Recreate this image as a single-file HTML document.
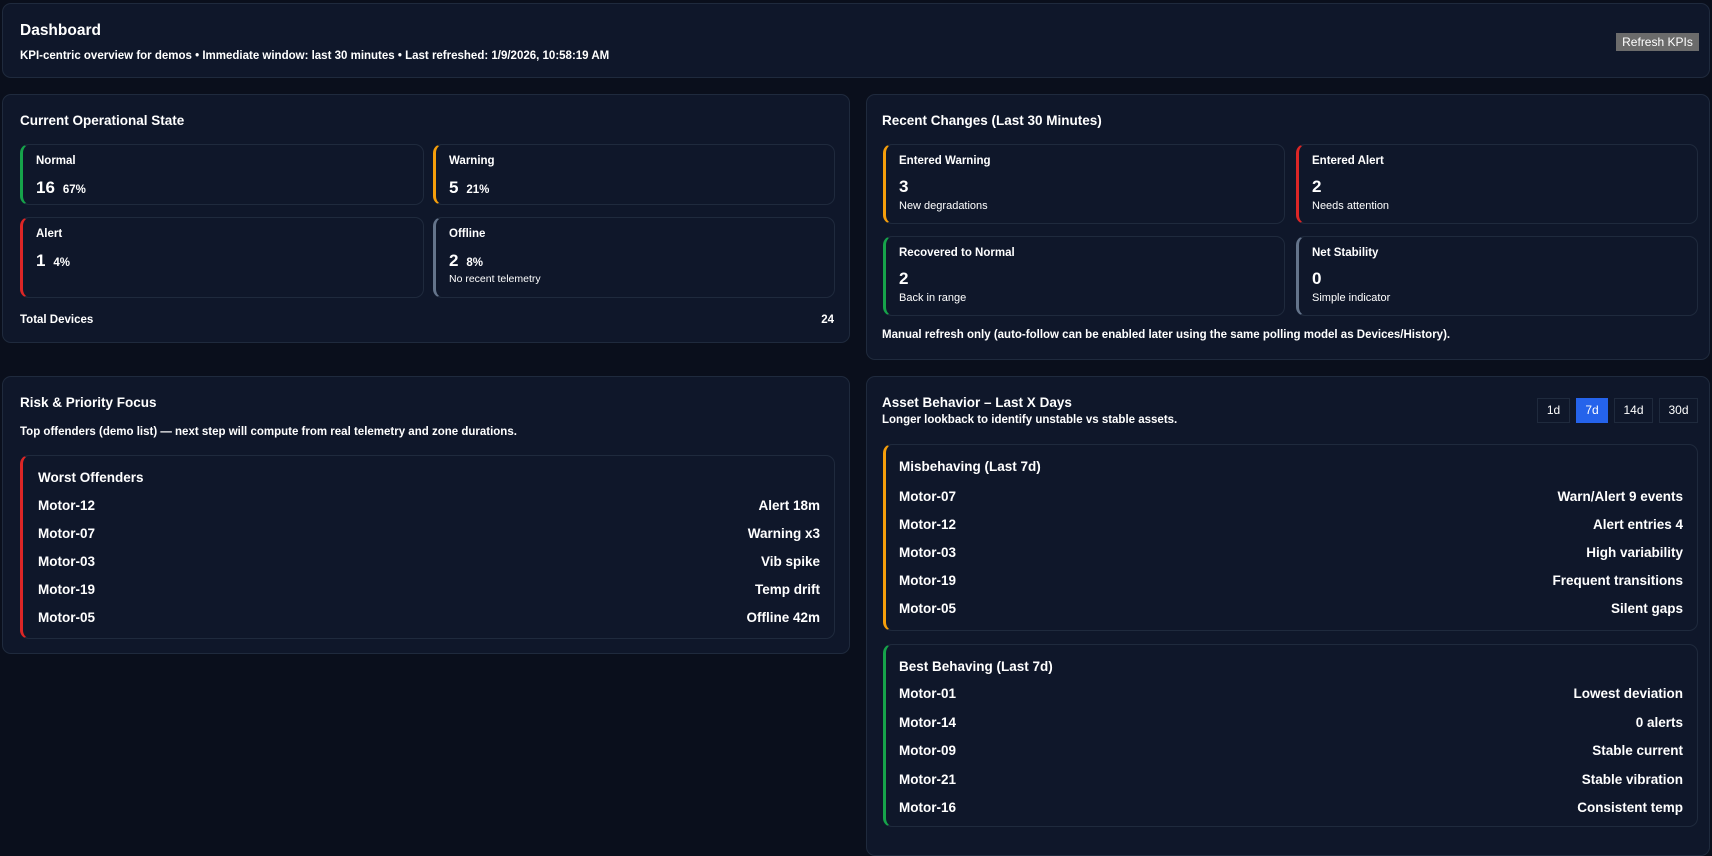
<!DOCTYPE html>
<html><head><meta charset="utf-8"><style>
*{box-sizing:border-box;margin:0;padding:0}
body{width:1712px;height:841px;overflow:hidden;background:#0a0f1c;font-family:"Liberation Sans",sans-serif;color:#fff;font-weight:bold;position:relative}
.a{position:absolute}
.card{position:absolute;background:#0f172a;border:1px solid #1f2a3d;border-radius:9px}
.tile{position:absolute;background:#0f172a;border:1px solid #1f2a3d;border-radius:9px;border-left:3px solid}
.t{position:absolute;white-space:nowrap;line-height:1}
.row{position:absolute;left:15px;right:14px;font-size:13.5px;line-height:16px;display:flex;justify-content:space-between}
.btn{position:absolute;top:398px;height:25px;border:1px solid #1f2a3d;background:#0f172a;font-size:12px;font-weight:normal;line-height:23px;text-align:center}
</style></head><body>
<div class="card" style="left:2px;top:3px;width:1708px;height:75px">
 <div class="t" style="left:17px;top:19px;font-size:15.5px">Dashboard</div>
 <div class="t" style="left:17px;top:47px;font-size:11.5px">KPI-centric overview for demos • Immediate window: last 30 minutes • Last refreshed: 1/9/2026, 10:58:19 AM</div>
 <div class="a" style="left:1613px;top:29px;width:83px;height:18px;background:#6b6b6b;font-size:12px;font-weight:normal;line-height:18px;text-align:center">Refresh KPIs</div>
</div>

<div class="card" style="left:2px;top:94px;width:848px;height:249px">
 <div class="t" style="left:17px;top:19px;font-size:13.5px">Current Operational State</div>
 <div class="tile" style="left:17px;top:49px;width:404px;height:61px;border-left-color:#16a34a">
  <div class="t" style="left:13px;top:11px;font-size:11.5px">Normal</div>
  <div class="t" style="left:13px;top:34px;font-size:17px">16 <span style="font-size:11.5px">&nbsp;67%</span></div></div>
 <div class="tile" style="left:430px;top:49px;width:402px;height:61px;border-left-color:#f59e0b">
  <div class="t" style="left:13px;top:11px;font-size:11.5px">Warning</div>
  <div class="t" style="left:13px;top:34px;font-size:17px">5 <span style="font-size:11.5px">&nbsp;21%</span></div></div>
 <div class="tile" style="left:17px;top:122px;width:404px;height:81px;border-left-color:#dc2626">
  <div class="t" style="left:13px;top:11px;font-size:11.5px">Alert</div>
  <div class="t" style="left:13px;top:34px;font-size:17px">1 <span style="font-size:11.5px">&nbsp;4%</span></div></div>
 <div class="tile" style="left:430px;top:122px;width:402px;height:81px;border-left-color:#64748b">
  <div class="t" style="left:13px;top:11px;font-size:11.5px">Offline</div>
  <div class="t" style="left:13px;top:34px;font-size:17px">2 <span style="font-size:11.5px">&nbsp;8%</span></div>
  <div class="t" style="left:13px;top:56px;font-size:10.5px;font-weight:normal">No recent telemetry</div></div>
 <div class="t" style="left:17px;top:220px;font-size:11.5px">Total Devices</div>
 <div class="t" style="right:15px;top:220px;font-size:11.5px">24</div>
</div>

<div class="card" style="left:866px;top:94px;width:844px;height:266px">
 <div class="t" style="left:15px;top:19px;font-size:13.5px">Recent Changes (Last 30 Minutes)</div>
 <div class="tile" style="left:16px;top:49px;width:402px;height:80px;border-left-color:#f59e0b">
  <div class="t" style="left:13px;top:11px;font-size:11.5px">Entered Warning</div>
  <div class="t" style="left:13px;top:33px;font-size:17px">3</div>
  <div class="t" style="left:13px;top:56px;font-size:11px;font-weight:normal">New degradations</div></div>
 <div class="tile" style="left:429px;top:49px;width:402px;height:80px;border-left-color:#dc2626">
  <div class="t" style="left:13px;top:11px;font-size:11.5px">Entered Alert</div>
  <div class="t" style="left:13px;top:33px;font-size:17px">2</div>
  <div class="t" style="left:13px;top:56px;font-size:11px;font-weight:normal">Needs attention</div></div>
 <div class="tile" style="left:16px;top:141px;width:402px;height:80px;border-left-color:#16a34a">
  <div class="t" style="left:13px;top:11px;font-size:11.5px">Recovered to Normal</div>
  <div class="t" style="left:13px;top:33px;font-size:17px">2</div>
  <div class="t" style="left:13px;top:56px;font-size:11px;font-weight:normal">Back in range</div></div>
 <div class="tile" style="left:429px;top:141px;width:402px;height:80px;border-left-color:#64748b">
  <div class="t" style="left:13px;top:11px;font-size:11.5px">Net Stability</div>
  <div class="t" style="left:13px;top:33px;font-size:17px">0</div>
  <div class="t" style="left:13px;top:56px;font-size:11px;font-weight:normal">Simple indicator</div></div>
 <div class="t" style="left:15px;top:235px;font-size:11.5px">Manual refresh only (auto-follow can be enabled later using the same polling model as Devices/History).</div>
</div>

<div class="card" style="left:2px;top:376px;width:848px;height:278px">
 <div class="t" style="left:17px;top:19px;font-size:13.5px">Risk &amp; Priority Focus</div>
 <div class="t" style="left:17px;top:50px;font-size:11.5px">Top offenders (demo list) — next step will compute from real telemetry and zone durations.</div>
 <div class="tile" style="left:17px;top:78px;width:815px;height:184px;border-left-color:#dc2626">
  <div class="t" style="left:15px;top:15px;font-size:13.5px">Worst Offenders</div>
  <div class="row" style="top:42px"><span>Motor-12</span><span>Alert 18m</span></div>
  <div class="row" style="top:70px"><span>Motor-07</span><span>Warning x3</span></div>
  <div class="row" style="top:98px"><span>Motor-03</span><span>Vib spike</span></div>
  <div class="row" style="top:126px"><span>Motor-19</span><span>Temp drift</span></div>
  <div class="row" style="top:154px"><span>Motor-05</span><span>Offline 42m</span></div>
 </div>
</div>

<div class="card" style="left:866px;top:376px;width:844px;height:480px">
 <div class="t" style="left:15px;top:19px;font-size:13.5px">Asset Behavior – Last X Days</div>
 <div class="t" style="left:15px;top:38px;font-size:11.5px">Longer lookback to identify unstable vs stable assets.</div>
 <div class="tile" style="left:16px;top:67px;width:815px;height:187px;border-left-color:#f59e0b">
  <div class="t" style="left:13px;top:15px;font-size:13.5px">Misbehaving (Last 7d)</div>
  <div class="row" style="left:13px;top:44px"><span>Motor-07</span><span>Warn/Alert 9 events</span></div>
  <div class="row" style="left:13px;top:72px"><span>Motor-12</span><span>Alert entries 4</span></div>
  <div class="row" style="left:13px;top:100px"><span>Motor-03</span><span>High variability</span></div>
  <div class="row" style="left:13px;top:128px"><span>Motor-19</span><span>Frequent transitions</span></div>
  <div class="row" style="left:13px;top:156px"><span>Motor-05</span><span>Silent gaps</span></div>
 </div>
 <div class="tile" style="left:16px;top:267px;width:815px;height:183px;border-left-color:#16a34a">
  <div class="t" style="left:13px;top:15px;font-size:13.5px">Best Behaving (Last 7d)</div>
  <div class="row" style="left:13px;top:41px"><span>Motor-01</span><span>Lowest deviation</span></div>
  <div class="row" style="left:13px;top:70px"><span>Motor-14</span><span>0 alerts</span></div>
  <div class="row" style="left:13px;top:98px"><span>Motor-09</span><span>Stable current</span></div>
  <div class="row" style="left:13px;top:127px"><span>Motor-21</span><span>Stable vibration</span></div>
  <div class="row" style="left:13px;top:155px"><span>Motor-16</span><span>Consistent temp</span></div>
 </div>
</div>
<div class="btn" style="left:1537px;width:33px">1d</div>
<div class="btn" style="left:1576px;width:32px;background:#2563eb;border-color:#2563eb">7d</div>
<div class="btn" style="left:1614px;width:39px">14d</div>
<div class="btn" style="left:1659px;width:39px">30d</div>
</body></html>
